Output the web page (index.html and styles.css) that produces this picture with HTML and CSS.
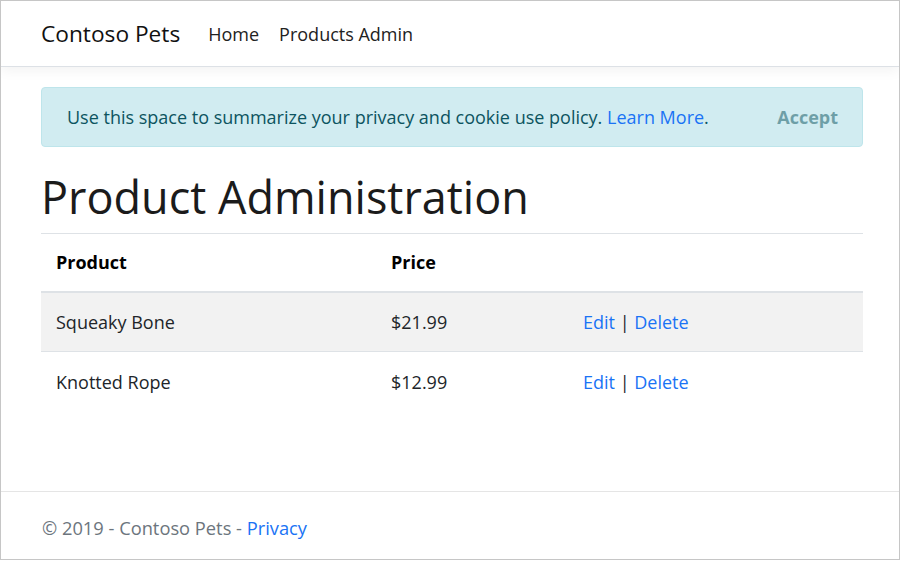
FILE: index.html
```html
<!DOCTYPE html>
<html lang="en">
<head>
<meta charset="utf-8">
<title>Product Administration - Contoso Pets</title>
<link rel="stylesheet" href="styles.css">
</head>
<body>
<div class="frame">
  <header class="navbar">
    <div class="container nav-inner">
      <a class="brand" href="#">Contoso Pets</a>
      <nav class="nav-links">
        <a class="nav-link" href="#">Home</a>
        <a class="nav-link" href="#">Products Admin</a>
      </nav>
    </div>
  </header>
  <main class="main">
    <div class="container">
      <div class="alert">
        <span class="alert-text">Use this space to summarize your privacy and cookie use policy. <a class="link" href="#">Learn More</a>.</span>
        <button class="accept" type="button">Accept</button>
      </div>
      <h1 class="title">Product Administration</h1>
      <table class="table">
        <thead>
          <tr>
            <th class="col-product">Product</th>
            <th class="col-price">Price</th>
            <th class="col-actions"></th>
          </tr>
        </thead>
        <tbody>
          <tr class="striped">
            <td>Squeaky Bone</td>
            <td>$21.99</td>
            <td><a class="link" href="#">Edit</a> | <a class="link" href="#">Delete</a></td>
          </tr>
          <tr>
            <td>Knotted Rope</td>
            <td>$12.99</td>
            <td><a class="link" href="#">Edit</a> | <a class="link" href="#">Delete</a></td>
          </tr>
        </tbody>
      </table>
    </div>
  </main>
  <footer class="footer">
    <div class="container">
      &copy; 2019 - Contoso Pets - <a class="link" href="#">Privacy</a>
    </div>
  </footer>
</div>
</body>
</html>
```

FILE: styles.css
```css
* { box-sizing: border-box; }
html, body { margin: 0; padding: 0; background: #fff; }
body {
  font-family: "Open Sans", "Noto Sans", "Liberation Sans", sans-serif;
  font-size: 18px;
  color: #212529;
}
.frame {
  width: 900px;
  height: 560px;
  border: 1px solid #c6c6c6;
  display: flex;
  flex-direction: column;
  overflow: hidden;
}
.container {
  width: 822px;
  margin-left: 40px;
}
.navbar {
  height: 66px;
  border-bottom: 1px solid #dde1e6;
  box-shadow: 0 4px 12px rgba(0, 0, 0, 0.05);
  display: flex;
  align-items: center;
  flex-shrink: 0;
  position: relative;
  z-index: 1;
}
.nav-inner {
  display: flex;
  align-items: center;
}
a { text-decoration: none; }
.brand {
  font-size: 22.7px;
  color: #111;
  margin-right: 28px;
}
.nav-links { display: flex; gap: 20px; }
.nav-link {
  color: #222;
  font-size: 18px;
}
.main {
  flex: 1;
  padding-top: 20px;
}
.alert {
  height: 60px;
  background: #d1ecf1;
  border: 1px solid #bee5eb;
  border-radius: 4px;
  color: #0c5460;
  display: flex;
  align-items: center;
  justify-content: space-between;
  padding: 0 24px 0 25px;
}
.alert-text { font-size: 18px; }
.link { color: #1a73f5; }
.accept {
  background: none;
  border: 0;
  padding: 0;
  font-family: inherit;
  font-size: 18px;
  font-weight: 700;
  color: #0c5460;
  opacity: 0.5;
}
.title {
  font-size: 45px;
  font-weight: 400;
  margin: 20px 0 0;
  height: 66px;
  line-height: 60px;
  color: #1b1b1b;
}
.table {
  width: 822px;
  border-collapse: collapse;
  font-size: 18px;
}
.table th, .table td {
  text-align: left;
  padding: 0 15px;
  vertical-align: middle;
}
.table th {
  height: 58px;
  font-weight: 700;
  color: #000;
  border-top: 1px solid #dee2e6;
  border-bottom: 2px solid #dee2e6;
}
.table td {
  height: 60px;
  border-top: 1px solid #dee2e6;
  color: #212529;
}
.table tbody tr.striped td { background: #f2f2f2; }
.col-product { width: 335px; }
.col-price { width: 192px; }
.footer {
  height: 68px;
  border-top: 1px solid #e5e5e5;
  display: flex;
  align-items: center;
  color: #6c757d;
  font-size: 18.3px;
  flex-shrink: 0;
  padding-top: 4px;
}
.footer .container { margin-left: 41px; }
```
